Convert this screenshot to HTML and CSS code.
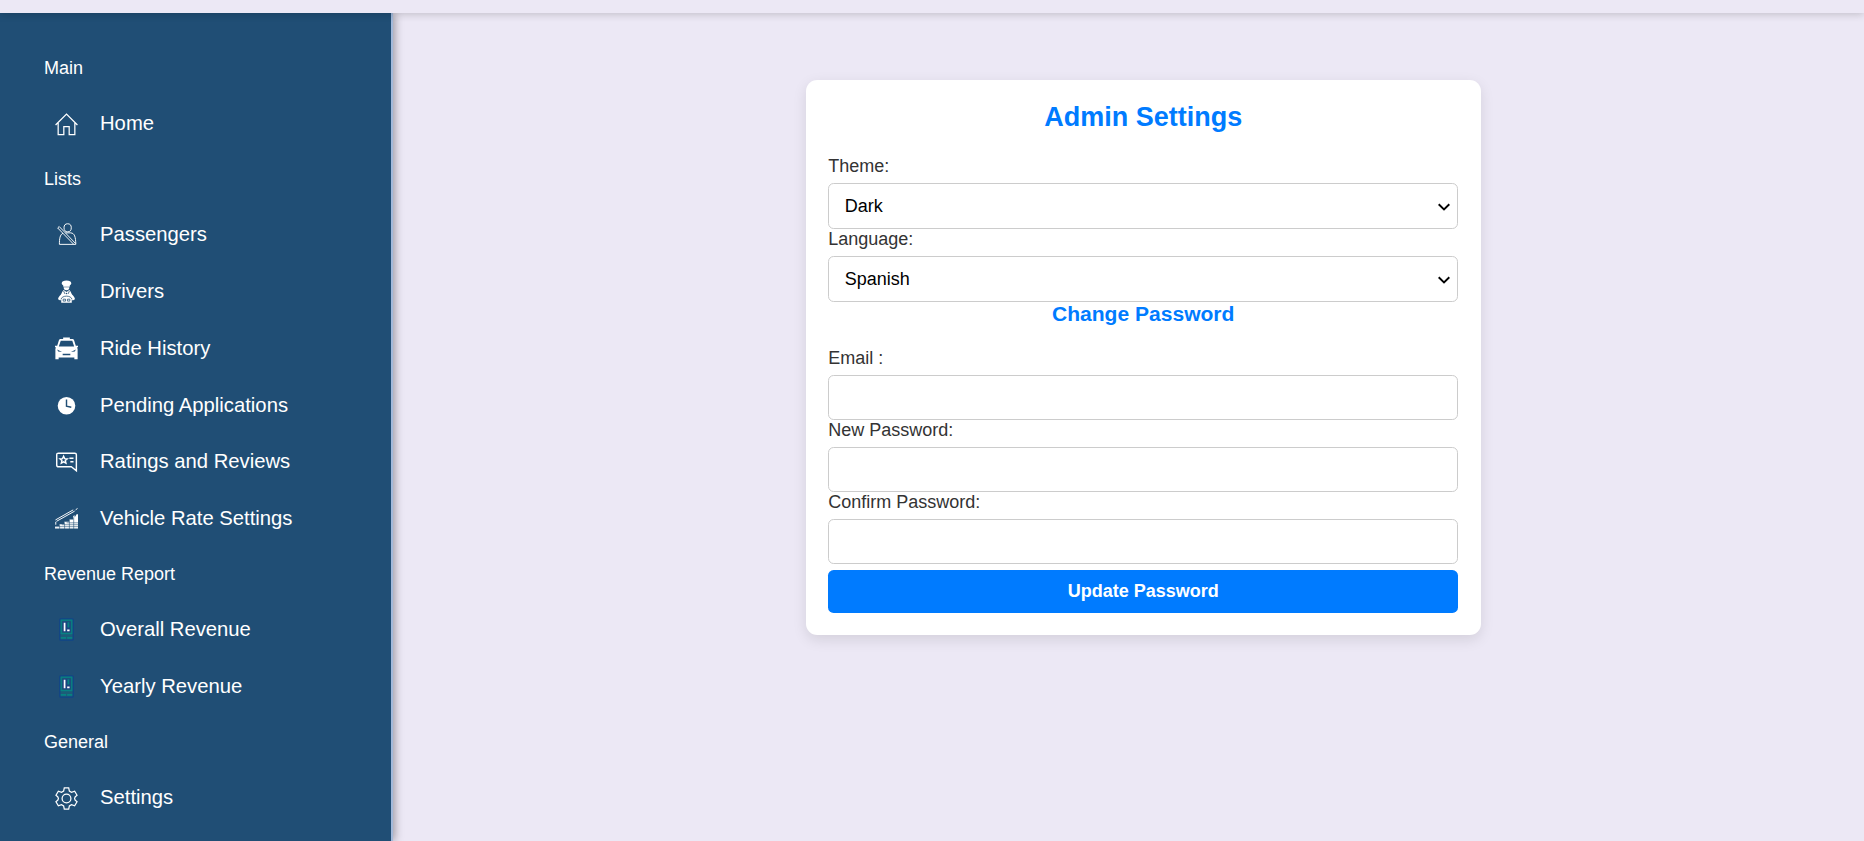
FILE: index.html
```html
<!DOCTYPE html>
<html lang="en">
<head>
<meta charset="utf-8">
<title>Admin Settings</title>
<link rel="stylesheet" href="styles.css">
</head>
<body>
<header class="topbar"></header>
<div class="layout">
  <nav class="sidebar">
    <h5 class="section">Main</h5>
    <a class="item"><svg class="icon icon-home" viewBox="0 0 24 24"><path d="M.6 12.500 12 1.200l11.400 11.300M3.300 10.500V22.500h5.900v-8.300h5.600v8.300h5.900V10.500"/></svg>Home</a>
    <h5 class="section">Lists</h5>
    <a class="item"><svg class="icon thin" viewBox="0 0 24 24"><ellipse cx="13.2" cy="5" rx="3.8" ry="4.2"/><path d="M4.600 22.300c0-6 .5-10 3.700-11.600M11 10.300h5.500c4 .5 5 4 5.200 12H4.600M2.800 5.200l16.700 17M4.400 3.700l17 17.600M2.800 5.200l1.600-1.500"/></svg>Passengers</a>
    <a class="item"><svg class="icon solid" viewBox="0 0 24 24"><path d="M7 3.500C7 1.500 9 .5 12 .5s5 1 5 3c0 1-.8 1.500-1.600 2.200V7H8.600V5.700C7.800 5 7 4.500 7 3.500z"/><path d="M9 7.500h6c0 1.800-1 3.200-3 3.200s-3-1.400-3-3.200z"/><path d="m9 10.500 3 2 3-2c1.300 1.200 1.800 3 3 5 1.500 1.500 2.800 3 2.800 4.500L18.500 21.500 17.500 20v3.700h-11V20l-1 1.500L3.200 20c0-1.500 1.300-3 2.800-4.500 1.200-2 1.700-3.800 3-5z"/><circle class="cut" cx="12" cy="14" r=".8"/><path class="cut-line" d="m9 11.500 1.300 3M15 11.500l-1.300 3M6.300 20c1-4.200 10.400-4.200 11.400 0M8.500 20h2.500v2H8.500zM13 20h2.500v2H13z"/></svg>Drivers</a>
    <a class="item"><svg class="icon solid" viewBox="0 0 24 24"><path fill-rule="evenodd" d="M8.500.5h7v1.700h2.300c1.100 0 1.800.5 2.200 1.500l1.700 5.500H24v1.500h-1l.6 1.800V23.300h-3.400v-1.800H3.800v1.800H.4V12.500l.6-1.800H0V9.200h2.300L4 3.700c.4-1 1.100-1.500 2.200-1.500h2.300zM6 3.900 4 9.800h16l-2-5.900zM2.200 13l1.200 2.200 4 .4zm19.600 0-5.200 2.600 4-.4zM8 17.500V19h8v-1.500z"/></svg>Ride History</a>
    <a class="item"><svg class="icon solid" viewBox="0 0 24 24"><circle cx="12" cy="12.300" r="9.200"/><path class="clock-hands" d="M12 5.800v7l5 1"/></svg>Pending Applications</a>
    <a class="item"><svg class="icon" viewBox="0 0 24 24"><path d="M3.500 3.300h17.200c1 0 1.600.6 1.600 1.600V21.600L17 17.500H3.500c-1 0-1.700-.6-1.700-1.600v-11C1.800 3.900 2.500 3.300 3.500 3.300zM9 6.600l1.100 2.400 2.700.2-2 1.800.6 2.700L9 12.300l-2.400 1.400.6-2.700-2-1.800 2.700-.2zM15 8.600h4.300M16 12.300h3.300"/></svg>Ratings and Reviews</a>
    <a class="item"><svg class="icon thin" viewBox="0 0 24 24"><path d="M.5 13.500 19 3M1.500 15 20.500 4.300M21.500 3l2-1.500M.8 15.500v3"/><path class="bars" d="M0 22.500v-2.300h4.500V18h5.200v-2.500h5.200V13H19V9.500l1.500-1V11l2-3.500H24v15z"/><path class="bars-gap" d="M0 20.500h24M7 18.500h17M12 16.500h12M4.800 18v5M10 16v7M15 13v10M19.500 11v12"/></svg>Vehicle Rate Settings</a>
    <h5 class="section">Revenue Report</h5>
    <a class="item"><svg class="icon" viewBox="0 0 24 24"><rect class="dev-body" x="5" y=".8" width="14" height="22.400" rx="1"/><rect class="dev-screen" x="6.500" y="2.300" width="11" height="14"/><rect class="dev-panel" x="7.800" y="3.700" width="8.400" height="11"/><path class="dev-keys" d="M6 20.700h5.500M12.600 20.700H18M14 4.500v5.500"/><path class="dev-marks" d="M10 5v8.800M12.700 12.800h2.500"/></svg>Overall Revenue</a>
    <a class="item"><svg class="icon" viewBox="0 0 24 24"><rect class="dev-body" x="5" y=".8" width="14" height="22.400" rx="1"/><rect class="dev-screen" x="6.500" y="2.300" width="11" height="14"/><rect class="dev-panel" x="7.800" y="3.700" width="8.400" height="11"/><path class="dev-keys" d="M6 20.700h5.500M12.600 20.700H18M14 4.500v5.500"/><path class="dev-marks" d="M10 5v8.800M12.700 12.800h2.500"/></svg>Yearly Revenue</a>
    <h5 class="section">General</h5>
    <a class="item"><svg class="icon icon-gear" viewBox="0 0 24 24"><circle cx="12" cy="12" r="4.600"/><path d="M9.700 1h4.600l.7 3.300 2.200 1.300 3.300-1.200 2.500 4.200q-2.600 1.700-2.600 3.400t2.600 3.400l-2.500 4.200-3.300-1.200-2.200 1.300-.7 3.300H9.700L9 19.700l-2.200-1.300-3.300 1.200L1 15.400q2.600-1.700 2.600-3.400T1 8.600l2.500-4.200 3.300 1.200L9 4.300z"/></svg>Settings</a>
  </nav>
  <main class="content">
    <section class="card">
      <h2 class="title">Admin Settings</h2>
      <label class="label" for="theme">Theme:</label>
      <div class="select-wrap">
        <select class="field select" id="theme"><option>Light</option><option selected>Dark</option></select>
        <svg class="chevron" viewBox="0 0 12 8"><path d="M.7 1.200 6 6.400l5.300-5.200"/></svg>
      </div>
      <label class="label" for="language">Language:</label>
      <div class="select-wrap">
        <select class="field select" id="language"><option>English</option><option selected>Spanish</option></select>
        <svg class="chevron" viewBox="0 0 12 8"><path d="M.7 1.200 6 6.400l5.300-5.200"/></svg>
      </div>
      <h3 class="subtitle">Change Password</h3>
      <label class="label" for="email">Email :</label>
      <input class="field" id="email" type="email">
      <label class="label" for="new-password">New Password:</label>
      <input class="field" id="new-password" type="password">
      <label class="label" for="confirm-password">Confirm Password:</label>
      <input class="field" id="confirm-password" type="password">
      <button class="button" type="button">Update Password</button>
    </section>
  </main>
</div>
</body>
</html>
```
FILE: styles.css
```css
* { box-sizing: border-box; }

body {
  margin: 0;
  height: 841px;
  overflow: hidden;
  display: flex;
  flex-direction: column;
  background: #ece8f5;
  color: #333;
  font-family: "Liberation Sans", Arial, sans-serif;
}

.topbar {
  position: relative;
  z-index: 2;
  flex: none;
  height: 13px;
  background: #ece8f5;
  box-shadow: 0 1px 9px rgba(0, 0, 0, 0.2);
}

.layout {
  flex: 1;
  min-height: 0;
  display: flex;
}

.sidebar {
  flex: none;
  width: 393px;
  padding: 28.200px 0 0 44px;
  background: #204e75;
  border-right: 2px solid #a3badb;
  box-shadow: 1px 0 9px rgba(0, 0, 0, 0.4);
  color: #fff;
}

.section {
  margin: 0;
  font-size: 18px;
  font-weight: 400;
  line-height: 54px;
}

.item {
  display: flex;
  align-items: center;
  gap: 22px;
  height: 56.860px;
  padding-left: 11px;
  font-size: 20.250px;
}

.icon {
  flex: none;
  width: 23px;
  height: 23px;
  fill: none;
  stroke: #fff;
  stroke-width: 1.500;
}

.icon-home,
.icon-gear { margin-top: 2px; stroke-width: 1.300; }
.thin { stroke-width: 1; }
.solid { fill: #fff; stroke: none; }
.cut { fill: #204e75; }
.cut-line { fill: none; stroke: #204e75; stroke-width: 0.800; }
.clock-hands { fill: none; stroke: #204e75; stroke-width: 1.500; }
.bars { fill: #fff; stroke: none; }
.bars-gap { stroke: #204e75; stroke-width: 0.600; }
.dev-body { fill: #1c5c78; stroke: #114488; stroke-width: 1.300; }
.dev-screen { fill: none; stroke: #078283; stroke-width: 1.300; }
.dev-panel { fill: #1c4580; stroke: none; }
.dev-keys { stroke: #078283; stroke-width: 2; }
.dev-marks { stroke: #fff; stroke-width: 1.800; }

.content {
  flex: 1;
  padding: 66.600px 0 0 20px;
}

.card {
  display: flex;
  flex-direction: column;
  width: 675px;
  margin-left: 392.700px;
  padding: 22.500px;
  background: #fff;
  border-radius: 11.250px;
  box-shadow: 0 4.500px 13.500px rgba(0, 0, 0, 0.1);
}

.title,
.subtitle {
  margin: 0 0 22.500px;
  color: #007bff;
  text-align: center;
}

.title { margin-bottom: 23px; font-size: 27px; line-height: 30.800px; }
.subtitle { font-size: 21.060px; line-height: 23.800px; }

.label {
  margin-bottom: 6.750px;
  font-size: 18px;
  line-height: 20.250px;
}

.field {
  width: 100%;
  height: 45.100px;
  padding: 0 15.500px;
  border: 1px solid #ccc;
  border-radius: 5.600px;
  background: #fff;
  color: #000;
  font: 18px "Liberation Sans", Arial, sans-serif;
  outline: none;
}

.select-wrap { position: relative; display: flex; }
.select { height: 45.900px; appearance: none; }

.chevron {
  position: absolute;
  top: 20px;
  right: 8.500px;
  width: 12px;
  height: 8px;
  fill: none;
  stroke: #000;
  stroke-width: 1.900;
  pointer-events: none;
}

.button {
  height: 43px;
  margin-top: 5.600px;
  border: 0;
  border-radius: 5.600px;
  background: #007bff;
  color: #fff;
  font: bold 18px "Liberation Sans", Arial, sans-serif;
}
```
